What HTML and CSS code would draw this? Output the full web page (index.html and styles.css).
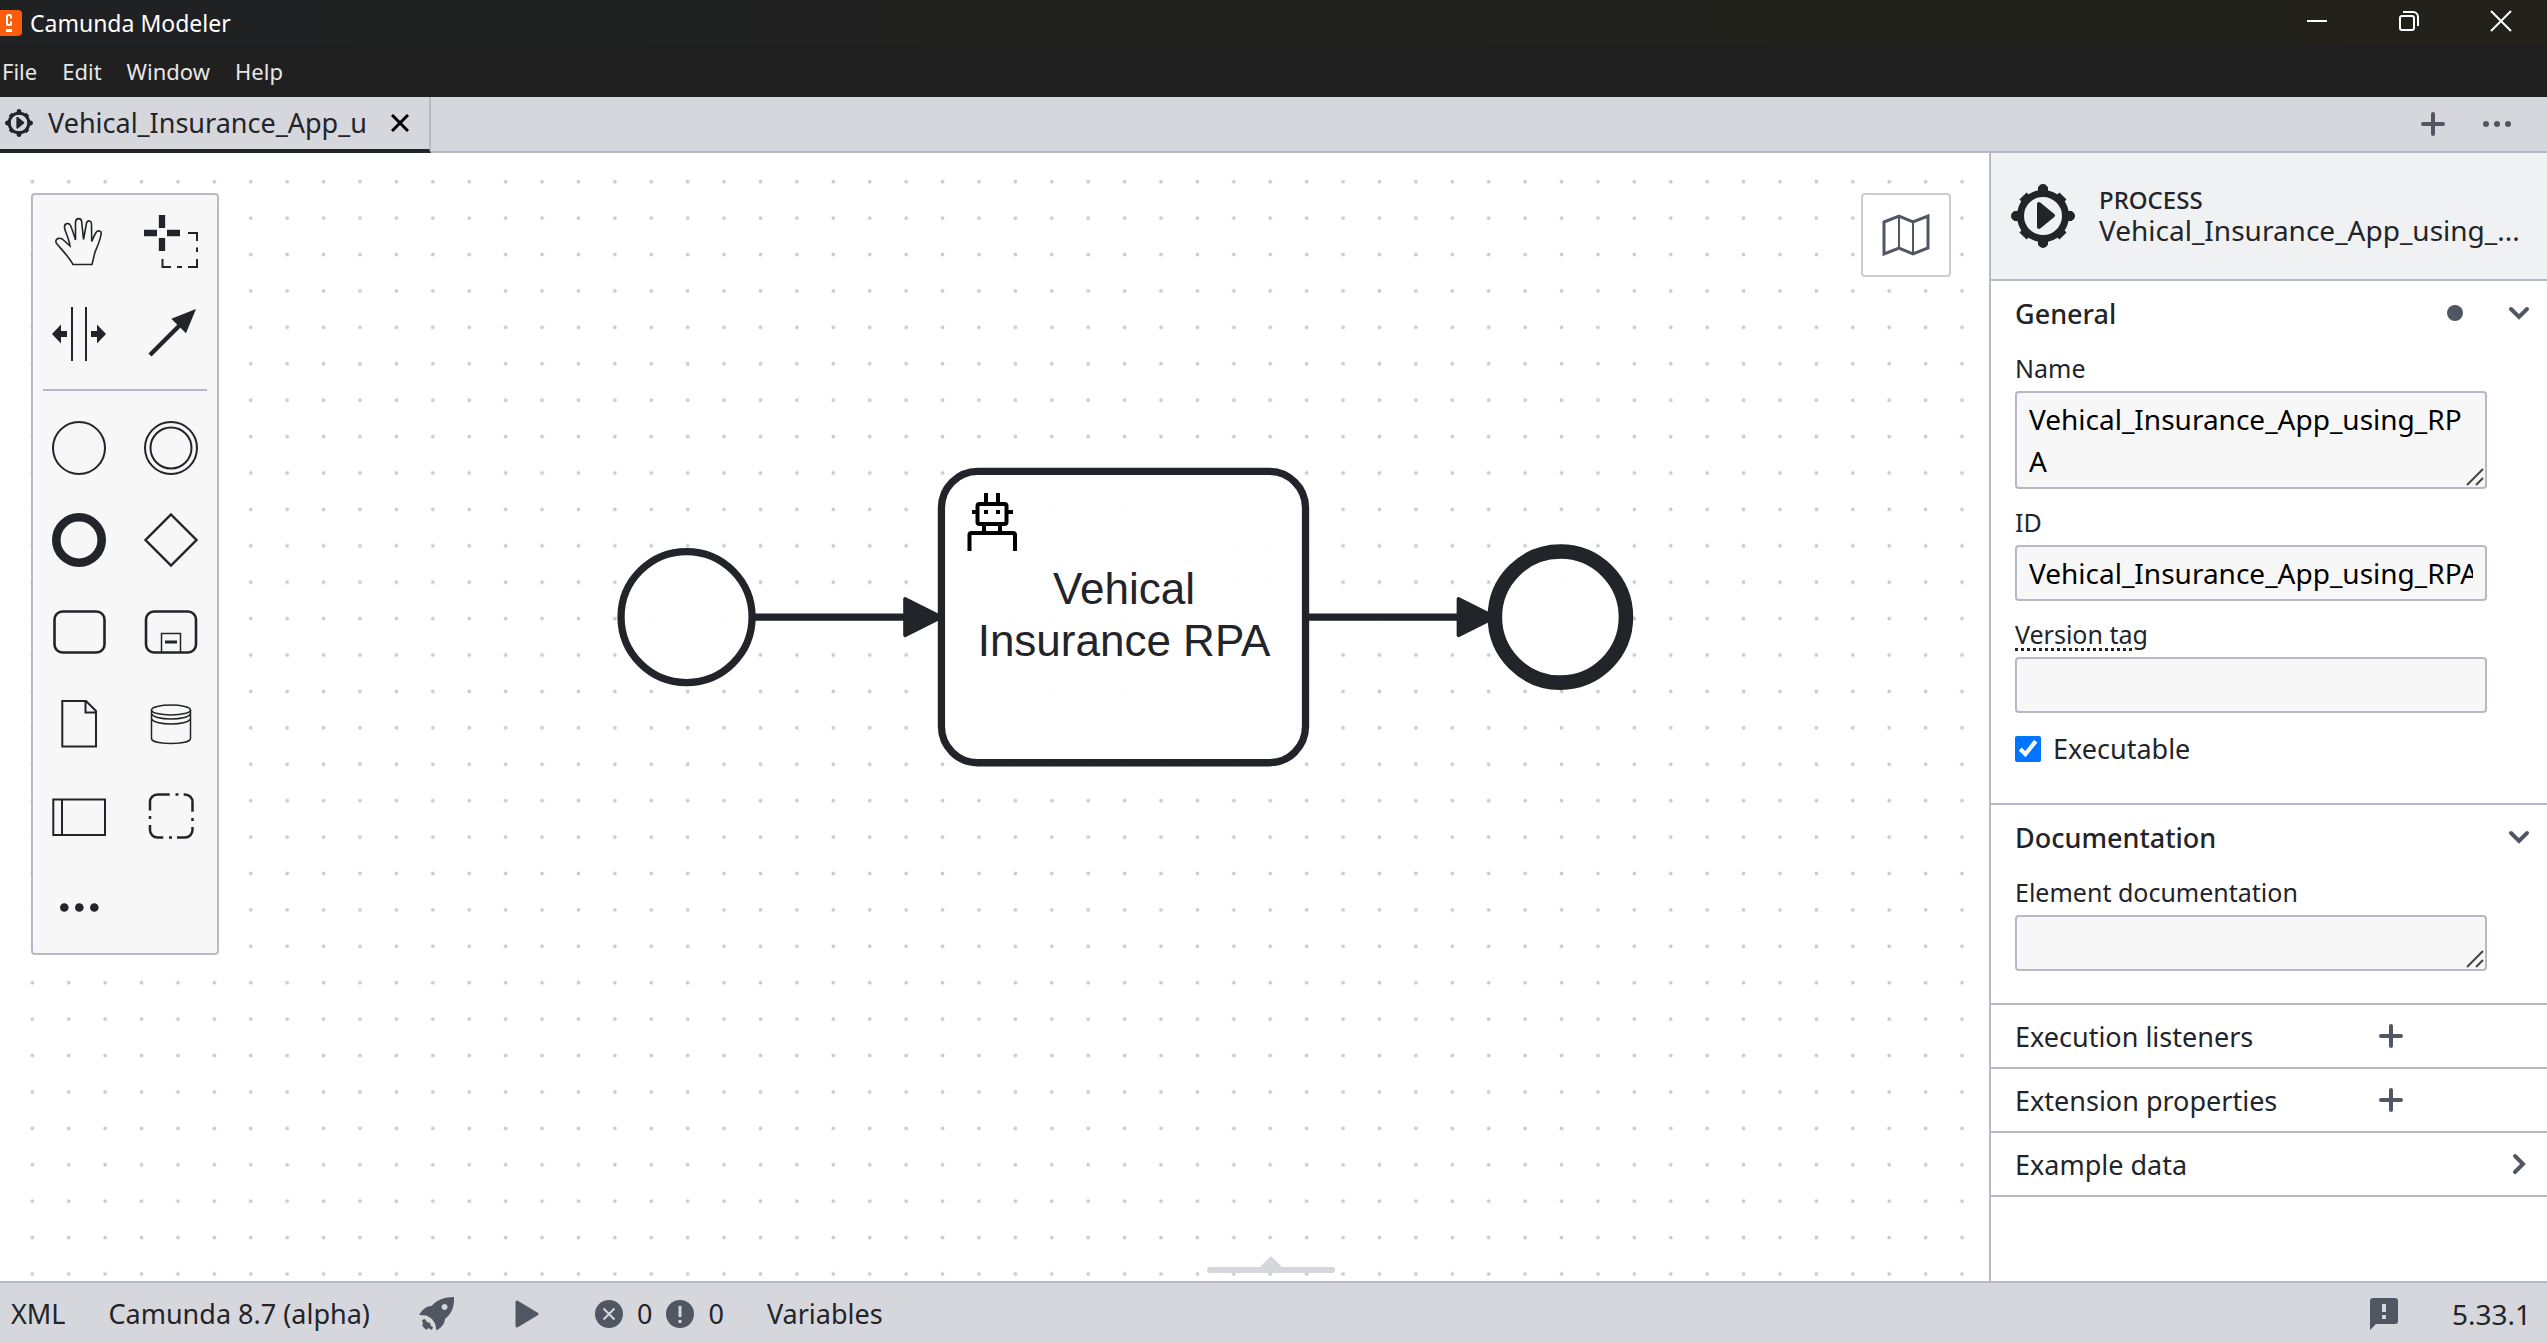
FILE: index.html
```html
<!DOCTYPE html>
<html lang="en">
<head>
<meta charset="utf-8">
<title>Camunda Modeler</title>
<link rel="stylesheet" href="styles.css">
</head>
<body>
<svg class="symbols" aria-hidden="true">
  <symbol id="gear" viewBox="0 0 64 64">
    <circle cx="32" cy="32" r="22.500" fill="none" stroke="currentColor" stroke-width="7"/>
    <g stroke="currentColor" stroke-width="10" fill="none">
      <path d="M32 10V3M32 54v7M10 32H3M54 32h7M16 16l-4-4M48 16l4-4M16 48l-4 4M48 48l4 4"/>
      <path d="M32 8V5M32 56v3M8 32H5M56 32h3" stroke-linecap="round"/>
    </g>
    <path d="M28 20v23l14-11.500z" fill="currentColor" stroke="currentColor" stroke-width="4" stroke-linejoin="round"/>
  </symbol>
  <symbol id="plus" viewBox="0 0 24 24"><path d="M12 2v20M2 12h20" fill="none" stroke="currentColor" stroke-width="4" stroke-linecap="round"/></symbol>
  <symbol id="chevron" viewBox="0 0 24 24"><path d="M4 8l8 8 8-8" fill="none" stroke="currentColor" stroke-width="4" stroke-linecap="round"/></symbol>
  <symbol id="grip" viewBox="0 0 18 18"><path d="M1 17L17 1M10 17l7-7" fill="none" stroke="#444" stroke-width="2"/></symbol>
</svg>

<div class="app">
  <header class="titlebar">
    <div class="brand">
      <svg class="logo" width="22" height="26" viewBox="0 0 22 26"><path d="M0 0h18a4 4 0 0 1 4 4v18a4 4 0 0 1-4 4H0z" fill="#fc5d0d"/><path d="M11 8.500V6.500a1.500 1.500 0 0 0-1.500-1.500h-1A1.500 1.500 0 0 0 7 6.500v7A1.500 1.500 0 0 0 8.500 15h1a1.500 1.500 0 0 0 1.500-1.500v-2" fill="none" stroke="#fff" stroke-width="2"/><path d="M6 19h6v3H6z" fill="#fff"/></svg>
      <span>Camunda Modeler</span>
    </div>
    <div class="window-controls">
      <button type="button" aria-label="Minimize"><svg width="22" height="22"><path d="M1 11h20" stroke="#fff" stroke-width="2"/></svg></button>
      <button type="button" aria-label="Restore"><svg width="22" height="22" fill="none" stroke="#fff" stroke-width="2"><rect x="2" y="6" width="14" height="14" rx="2"/><path d="M5 2h10a5 5 0 0 1 5 5v9"/></svg></button>
      <button type="button" aria-label="Close"><svg width="22" height="22"><path d="M1 1l20 20M21 1L1 21" stroke="#fff" stroke-width="2"/></svg></button>
    </div>
  </header>

  <nav class="menubar">
    <button type="button">File</button>
    <button type="button">Edit</button>
    <button type="button">Window</button>
    <button type="button">Help</button>
  </nav>

  <div class="tabbar">
    <div class="tab">
      <svg class="tab-icon" width="28" height="28"><use href="#gear"/></svg>
      <span class="tab-name">Vehical_Insurance_App_u</span>
      <button type="button" class="tab-close" aria-label="Close tab"><svg width="18" height="18"><path d="M1 1l16 16M17 1L1 17" stroke="#000" stroke-width="3"/></svg></button>
    </div>
    <div class="tab-actions">
      <button type="button" aria-label="New tab"><svg width="24" height="24"><use href="#plus"/></svg></button>
      <button type="button" aria-label="More"><svg width="30" height="24" fill="currentColor"><circle cx="4" cy="12" r="3"/><circle cx="15" cy="12" r="3"/><circle cx="26" cy="12" r="3"/></svg></button>
    </div>
  </div>

  <main class="workspace">
    <section class="canvas" aria-label="Diagram">
      <svg class="diagram">
        <defs>
          <pattern id="dots" width="10" height="10" patternUnits="userSpaceOnUse" patternTransform="translate(14.100 10.500) scale(3.641)"><circle cx="5" cy="5" r=".52" fill="#ccc"/></pattern>
        </defs>
        <rect width="100%" height="100%" fill="url(#dots)"/>
        <g transform="translate(33 29) scale(3.641)" fill="#fff" fill-opacity=".95" stroke="#22242a" stroke-width="2">
          <circle cx="179.500" cy="119.500" r="18"/>
          <rect x="249.500" y="79.500" width="100" height="80" rx="10"/>
          <circle cx="419.500" cy="119.500" r="18" stroke-width="4"/>
          <path d="M197.500 119.500H243M349.500 119.500H395"/>
          <path d="M239.500 114.500l10 5-10 5zM391.500 114.500l10 5-10 5z" fill="#22242a" fill-opacity="1" stroke-width="1" stroke-linejoin="round"/>
        </g>
        <g fill="none" stroke="#000" stroke-width="4">
          <path d="M986 340v10M998 340v10M972 359h5M1007 359h6M984 372v7M1000 372v7"/>
          <rect x="977.500" y="351" width="29" height="20" rx="2"/>
          <path d="M984 359h4M996 359h4"/>
          <path d="M969.500 398v-16a2 2 0 0 1 2-2h41.500a2 2 0 0 1 2 2v16"/>
        </g>
        <text class="node-label" x="1124" y="451">Vehical</text>
        <text class="node-label" x="1124" y="503">Insurance RPA</text>
      </svg>

      <div class="palette" role="toolbar" aria-label="Palette">
        <button type="button" aria-label="Hand tool"><svg><path d="M40 69.500C36 62 30 56 23.500 48.500C21 43.500 27 41.500 31 45.500L37 51C36 43 31.500 36 31.500 32C31.500 28 36 27.500 37.500 30.500C39.500 35 41 40 42.500 45V27C43 22.500 48.500 22.500 48.700 27L50.500 44.500L53.500 28C54.500 24.500 59 25.500 58.500 29.500L58.700 46.500C60 43 61.500 40 63 37.500C65 34.500 69 36 68 39.500C67 46 64.500 51 62 57L59 69.500Z" stroke-width="1.600"/></svg></button>
        <button type="button" aria-label="Lasso tool"><svg><path d="M37 20v13M37 43v13M19 38h13M42 38h13" stroke-width="6.300"/><path d="M63 38h9v8M72 52.500V57M72 64v8h-9M57 72h-5M46 72h-8.500V64"/></svg></button>
        <button type="button" aria-label="Space tool"><svg><path d="M39 20v54M53 20v54"/><path class="solid" d="M19 47l9-9.500V44h6v6h-6v6.500zM73 47l-9-9.500V44h-6v6h6v6.500z"/></svg></button>
        <button type="button" aria-label="Connect tool"><svg><path d="M25 68l30-30" stroke-width="4.500"/><path class="solid" d="M71 22L46.300 31.700 61 46.300z"/></svg></button>
        <hr>
        <button type="button" aria-label="Start event"><svg><circle cx="46" cy="47" r="26"/></svg></button>
        <button type="button" aria-label="Intermediate event"><svg><circle cx="46" cy="47" r="26"/><circle cx="46" cy="47" r="20.500"/></svg></button>
        <button type="button" aria-label="End event"><svg><circle cx="46" cy="47" r="22.700" stroke-width="8.600"/></svg></button>
        <button type="button" aria-label="Gateway"><svg><path d="M46 21.500L71.500 47 46 72.500 20.500 47z" stroke-width="2.400"/></svg></button>
        <button type="button" aria-label="Task"><svg><rect x="21.500" y="26.500" width="50" height="41" rx="8" stroke-width="2.600"/></svg></button>
        <button type="button" aria-label="Sub-process"><svg><rect x="21" y="26.500" width="50" height="41" rx="8" stroke-width="2.600"/><path d="M36.500 68V48.500h19V68" stroke-width="1.500"/><path d="M40 57h12" stroke-width="3"/></svg></button>
        <button type="button" aria-label="Data object"><svg><path d="M29.300 24H53l10 10v35.500H29.300zM52.500 24v11.500H63"/></svg></button>
        <button type="button" aria-label="Data store"><svg><g stroke-width="1.500"><ellipse cx="46" cy="33" rx="19.500" ry="5"/><path d="M26.500 33v28.500c0 6.500 39 6.500 39 0V33M26.500 36c0 8 39 8 39 0M26.500 41c0 8 39 8 39 0"/></g></svg></button>
        <button type="button" aria-label="Participant"><svg><path d="M20.300 30.500h51.700v35.500H20.300zM29 30.500V66"/></svg></button>
        <button type="button" aria-label="Group"><svg><path d="M25 41.500V33a7.500 7.500 0 0 1 7.500-7.500H44.700M50.500 25.500h3M58.700 25.500H60a7.500 7.500 0 0 1 7.500 7.500v9.700M67.500 49v3M67.500 58v3a7.500 7.500 0 0 1-7.500 7.500h-8M47 68.500h-3M38.300 68.500h-5.800A7.500 7.500 0 0 1 25 61v-5M25 50v-3" stroke-width="2.500"/></svg></button>
        <button type="button" aria-label="More elements"><svg><g class="solid"><circle cx="31.300" cy="46.500" r="4.300"/><circle cx="46.300" cy="46.500" r="4.300"/><circle cx="61.300" cy="46.500" r="4.300"/></g></svg></button>
      </div>

      <button type="button" class="minimap" aria-label="Toggle minimap"><svg width="48" height="42" fill="none" stroke="#505762"><path d="M2 8l15-6 14 6 15-6v32l-15 6-14-6-15 6z" stroke-width="3"/><path d="M17 2v32M31 8v32" stroke-width="2"/></svg></button>
    </section>

    <aside class="properties">
      <div class="panel-head">
        <svg width="64" height="64"><use href="#gear"/></svg>
        <div class="panel-titles">
          <div class="panel-type">PROCESS</div>
          <div class="panel-name">Vehical_Insurance_App_using_...</div>
        </div>
      </div>

      <section class="group">
        <div class="group-head"><h2>General</h2><span class="dot"></span><button type="button" aria-label="Collapse General"><svg width="24" height="24"><use href="#chevron"/></svg></button></div>
        <div class="fields">
          <div class="field">
            <label for="name">Name</label>
            <div class="resizable"><textarea id="name" rows="2">Vehical_Insurance_App_using_RPA</textarea><svg class="grip" width="18" height="18"><use href="#grip"/></svg></div>
          </div>
          <div class="field">
            <label for="pid">ID</label>
            <input id="pid" type="text" value="Vehical_Insurance_App_using_RPA">
          </div>
          <div class="field">
            <label for="version"><span class="hinted">Version tag</span></label>
            <input id="version" type="text">
          </div>
          <div class="check"><input id="exec" type="checkbox" checked><label for="exec">Executable</label></div>
        </div>
      </section>

      <section class="group">
        <div class="group-head"><h2>Documentation</h2><button type="button" aria-label="Collapse Documentation"><svg width="24" height="24"><use href="#chevron"/></svg></button></div>
        <div class="fields">
          <div class="field">
            <label for="doc">Element documentation</label>
            <div class="resizable"><textarea id="doc" rows="1"></textarea><svg class="grip" width="18" height="18"><use href="#grip"/></svg></div>
          </div>
        </div>
      </section>

      <section class="group closed"><div class="group-head"><h2>Execution listeners</h2><button type="button" class="add" aria-label="Add execution listener"><svg width="24" height="24"><use href="#plus"/></svg></button></div></section>
      <section class="group closed"><div class="group-head"><h2>Extension properties</h2><button type="button" class="add" aria-label="Add extension property"><svg width="24" height="24"><use href="#plus"/></svg></button></div></section>
      <section class="group closed"><div class="group-head"><h2>Example data</h2><button type="button" aria-label="Expand Example data"><svg class="right" width="24" height="24"><use href="#chevron"/></svg></button></div></section>
    </aside>

    <svg class="drawer-handle" width="128" height="18" fill="#d6d7dc"><rect y="11" width="128" height="6" rx="3"/><path d="M64 0l11 11H53z"/></svg>
  </main>

  <footer class="statusbar">
    <button type="button" class="xml">XML</button>
    <button type="button" class="engine">Camunda 8.7 (alpha)</button>
    <button type="button" class="deploy" aria-label="Deploy"><svg width="36" height="34" fill="currentColor"><path fill-rule="evenodd" d="M35 0c.5 11-3 17-9 22-.5 5-3 8-8.500 11.500L16 26.500 13 22 7.500 18.500 0 18C3 13 7 9 12.500 9 18 3 25 0 35 0zM25.500 7a3 3 0 1 0 .1 0z"/><path d="M3 23l3-1 2 3 3 1 1 3 2 1-1 3-4-2-1 2-3-2-2-3 1-1z"/></svg></button>
    <button type="button" class="run" aria-label="Start instance"><svg width="24" height="28" fill="currentColor"><path d="M2 2v24l20-12z" stroke="currentColor" stroke-width="3" stroke-linejoin="round"/></svg></button>
    <button type="button" class="problems"><svg width="28" height="28"><circle cx="14" cy="14" r="14" fill="currentColor"/><path d="M8.500 8.500l11 11M19.500 8.500l-11 11" stroke="#d6d7dc" stroke-width="2"/></svg><span>0</span><svg width="28" height="28"><circle cx="14" cy="14" r="14" fill="currentColor"/><path d="M14 6v11M14 20v3" stroke="#d6d7dc" stroke-width="3"/></svg><span>0</span></button>
    <button type="button">Variables</button>
    <button type="button" class="feedback" aria-label="Feedback"><svg width="28" height="32"><path d="M3 0h22a3 3 0 0 1 3 3v20a3 3 0 0 1-3 3H6l-6 6V3a3 3 0 0 1 3-3z" fill="currentColor"/><path d="M14 6v8M14 17v4" stroke="#d6d7dc" stroke-width="4"/></svg></button>
    <button type="button" class="version">5.33.1</button>
  </footer>
</div>
</body>
</html>
```
FILE: styles.css
```css
* {
  box-sizing: border-box;
}

body {
  margin: 0;
  color: #22242a;
  font: 27px/40px "Noto Sans", sans-serif;
}

button {
  display: flex;
  align-items: center;
  justify-content: center;
  margin: 0;
  padding: 0;
  border: 0;
  background: none;
  color: inherit;
  font: inherit;
}

svg {
  display: block;
  flex: none;
}

.symbols {
  display: none;
}

.app {
  display: flex;
  flex-direction: column;
  height: 100vh;
  overflow: hidden;
}

/* Window chrome */
.titlebar {
  display: flex;
  justify-content: space-between;
  height: 45px;
  background: linear-gradient(90deg, #1f2123, #22211a);
  color: #fff;
  font-size: 23px;
}

.brand {
  display: flex;
  align-items: center;
  gap: 8px;
}

.window-controls {
  display: flex;
}

.window-controls button {
  width: 92px;
  height: 42px;
}

.menubar {
  display: flex;
  align-items: center;
  gap: 25px;
  height: 52px;
  padding-left: 2px;
  background: #202020;
  color: #e6e6e6;
  font-size: 22px;
}

.tabbar {
  display: flex;
  justify-content: space-between;
  height: 56px;
  border-bottom: 2px solid #b8b8c6;
  background: #d6d7dc;
}

.tab {
  display: flex;
  align-items: center;
  width: 431px;
  height: 56px;
  padding-left: 5px;
  border-right: 2px solid #b8b8c6;
  border-bottom: 4px solid #22242a;
}

.tab-name {
  width: 326px;
  margin: 0 17px 0 15px;
  white-space: nowrap;
}

.tab-actions {
  display: flex;
  align-items: center;
  gap: 37px;
  padding-right: 35px;
  color: #505762;
}

/* Canvas */
.workspace {
  position: relative;
  display: flex;
  flex: 1;
  min-height: 0;
}

.canvas {
  position: relative;
  flex: 1;
  min-width: 0;
  background: #fff;
}

.diagram {
  width: 100%;
  height: 100%;
}

.node-label {
  fill: #22242a;
  font: 44px "Liberation Sans", sans-serif;
  text-anchor: middle;
}

.palette {
  position: absolute;
  top: 40px;
  left: 31px;
  display: grid;
  grid-template-columns: 92px 92px;
  border: 2px solid #b8b8c6;
  border-radius: 4px;
  background: #f7f7f7;
}

.palette svg {
  width: 92px;
  height: 92px;
  fill: none;
  stroke: #22242a;
  stroke-width: 2;
}

.palette .solid {
  fill: #22242a;
  stroke: none;
}

.palette hr {
  grid-column: 1 / -1;
  width: 164px;
  height: 2px;
  margin: 10px;
  border: 0;
  background: #b8b8c6;
}

.minimap {
  position: absolute;
  top: 40px;
  right: 38px;
  width: 90px;
  height: 84px;
  border: 2px solid #ccc;
  border-radius: 4px;
  background: #fff;
}

.drawer-handle {
  position: absolute;
  bottom: 7px;
  left: 50%;
  margin-left: -67px;
}

/* Properties panel */
.properties {
  width: 558px;
  border-left: 2px solid #b8b8c6;
  background: #fff;
}

.panel-head {
  display: flex;
  align-items: center;
  gap: 24px;
  height: 128px;
  padding-left: 20px;
  border-bottom: 2px solid #b8b8c6;
  background: #f0f1f3;
}

.panel-titles {
  padding-top: 4px;
}

.panel-type {
  font-size: 24px;
  font-weight: 500;
  line-height: 24px;
}

.panel-name {
  font-size: 28px;
  line-height: 36px;
  white-space: nowrap;
}

.group {
  border-bottom: 2px solid #b8b8c6;
}

.group-head {
  display: flex;
  align-items: center;
  height: 64px;
  padding: 0 16px 0 24px;
}

.closed .group-head {
  height: 62px;
}

.group-head h2 {
  flex: 1;
  margin: 0;
  padding-top: 2px;
  font-size: 27px;
  font-weight: 500;
}

.closed .group-head h2 {
  font-weight: 400;
}

.group-head button {
  color: #505762;
}

.group-head .add {
  margin-right: 128px;
}

.right {
  transform: rotate(-90deg);
}

.dot {
  width: 16px;
  height: 16px;
  margin-right: 44px;
  border-radius: 50%;
  background: #505762;
}

.fields {
  display: flex;
  flex-direction: column;
  gap: 13px;
  padding: 3px 60px 32px 24px;
}

.field label {
  display: block;
  margin-bottom: 3px;
  font-size: 25px;
}

.hinted {
  text-decoration: underline dotted 3px;
  text-underline-offset: 4px;
}

.resizable {
  position: relative;
}

.field input,
.field textarea {
  display: block;
  width: 100%;
  height: 56px;
  margin: 0;
  padding: 5px 12px;
  border: 2px solid #b8b8c6;
  border-radius: 4px;
  background: #f7f7f7;
  color: #000;
  font: inherit;
  font-size: 28px;
  line-height: 42px;
}

.field textarea {
  overflow: hidden;
  resize: none;
  word-break: break-all;
}

#name {
  height: 98px;
}

.grip {
  position: absolute;
  right: 3px;
  bottom: 3px;
}

.check {
  display: flex;
  align-items: center;
  gap: 12px;
  height: 45px;
}

.check input {
  width: 26px;
  height: 26px;
  margin: 0;
  accent-color: #0075ff;
}

/* Status bar */
.statusbar {
  display: flex;
  align-items: center;
  height: 62px;
  padding: 2px 16px 0 11px;
  border-top: 2px solid #b8b8c6;
  background: #d6d7dc;
}

.xml,
.engine,
.problems {
  margin-right: 43px;
}

.deploy {
  margin: 0 60px 0 6px;
}

.deploy,
.run,
.feedback,
.problems svg {
  color: #505762;
}

.run {
  margin-right: 56px;
}

.problems {
  gap: 14px;
}

.feedback {
  margin: 0 54px 0 auto;
}

.version {
  font-size: 28px;
}
```
